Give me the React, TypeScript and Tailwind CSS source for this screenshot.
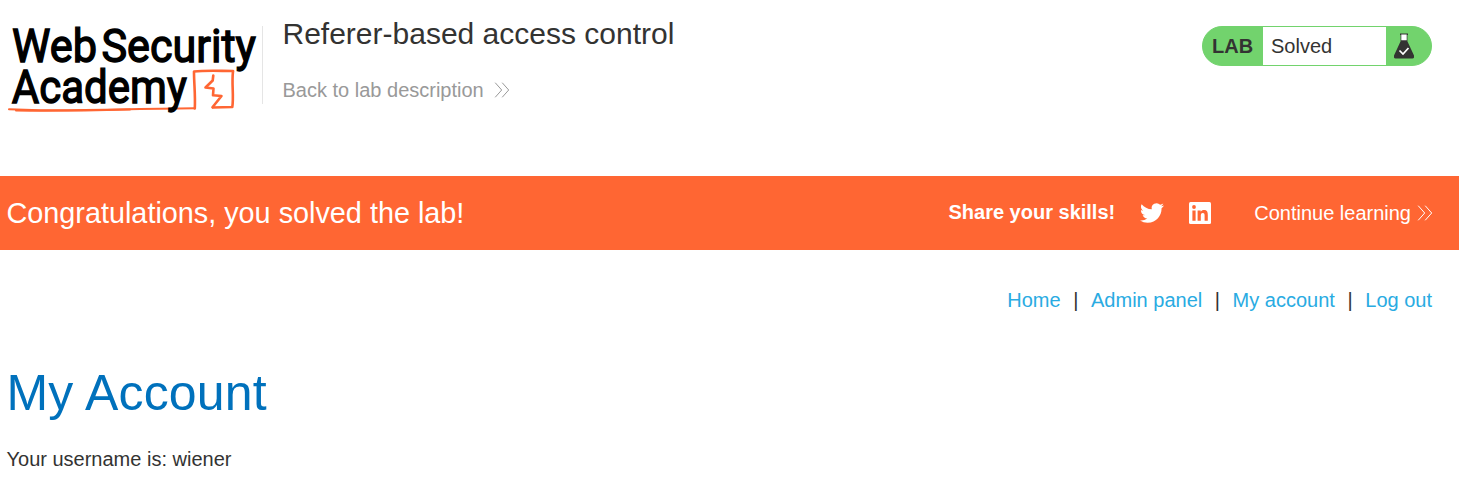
function Logo() {
  return (
    <svg viewBox="0 0 262 120" className="block h-[120px] w-[262px] shrink-0 overflow-visible" role="img" aria-label="Web Security Academy">
      <g fill="none" stroke="#ff6633" strokeLinejoin="round" strokeLinecap="round">
        <path d="M9 109.300 L40 110.200 C80 110.500 130 108.800 194.500 108.300" strokeWidth="2" />
        <path d="M16 110.500 C50 111 90 110.500 130 109.500" strokeWidth="2" />
        <path d="M194.800 108.500 C195.500 95 194 84 194 71.500 C206 70.200 220 71 233 71" strokeWidth="2.600" />
        <path d="M233 71.300 C231.500 84 234 96 232.300 107 L213 107.500" strokeWidth="2.600" />
        <path d="M213.300 75.500 L212.700 80.500 L205.500 87.500 L213.500 88.500 L213 95.300 L221.500 96 L212.500 107.300" strokeWidth="2.600" />
      </g>
      <g fill="#000" stroke="#000" strokeWidth="1.400" fontFamily="Roboto, sans-serif" fontWeight="400" fontSize="46.500">
        <text x="12" y="61.500" textLength="85" lengthAdjust="spacingAndGlyphs">Web</text>
        <text x="101.500" y="61.500" textLength="154.500" lengthAdjust="spacingAndGlyphs">Security</text>
        <text x="11.800" y="102.500" textLength="175" lengthAdjust="spacingAndGlyphs">Academy</text>
      </g>
    </svg>
  );
}

function Chevrons() {
  return (
    <svg viewBox="0 0 16 16" className="h-4 w-4 shrink-0" fill="none" stroke="currentColor" strokeWidth="1">
      <path d="M1.200 0.700 L7.700 8 L1.200 15.300 M8.200 0.700 L14.700 8 L8.200 15.300" />
    </svg>
  );
}

function Flask() {
  return (
    <svg viewBox="0 0 20 26" className="h-[26px] w-5">
      <path d="M6 0.500 H14 V2 H13.400 V8.300 L20 22.500 Q20.600 25.500 18.500 25.500 H1.500 Q-0.600 25.500 0 22.500 L6.600 8.300 V2 H6 Z" fill="#333332" />
      <path d="M7.300 1.500 H12.700 V7.300 H7.300 Z" fill="#fff" />
      <path d="M5.500 17.500 L9 21 L14.500 15" fill="none" stroke="#fff" strokeWidth="1.700" />
    </svg>
  );
}

function Twitter() {
  return (
    <svg viewBox="0 0 24 24" className="h-6 w-6" fill="currentColor">
      <path d="M23.953 4.570a10 10 0 01-2.825.775 4.958 4.958 0 002.163-2.723c-.951.555-2.005.959-3.127 1.184a4.920 4.920 0 00-8.384 4.482C7.690 8.095 4.067 6.130 1.640 3.162a4.822 4.822 0 00-.666 2.475c0 1.710.870 3.213 2.188 4.096a4.904 4.904 0 01-2.228-.616v.060a4.923 4.923 0 003.946 4.827 4.996 4.996 0 01-2.212.085 4.936 4.936 0 004.604 3.417 9.867 9.867 0 01-6.102 2.105c-.390 0-.779-.023-1.170-.067a13.995 13.995 0 007.557 2.209c9.053 0 13.998-7.496 13.998-13.985 0-.210 0-.420-.015-.630A9.935 9.935 0 0024 4.590z" />
    </svg>
  );
}

function LinkedIn() {
  return (
    <svg viewBox="0 0 22 22" className="h-[22px] w-[22px]">
      <rect width="22" height="22" rx="1.500" fill="#fff" />
      <g fill="#ff6633">
        <circle cx="5" cy="5" r="1.900" />
        <path d="M3.400 8.400 H6.600 V18.700 H3.400 Z M8.600 8.400 H11.700 V9.800 C12.400 8.700 13.500 8.100 14.900 8.100 C18 8.100 18.800 10.100 18.800 13 V18.700 H15.600 V13.600 C15.600 12.200 15.500 10.900 13.800 10.900 C12.100 10.900 11.800 12.200 11.800 13.600 V18.700 H8.600 Z" />
      </g>
    </svg>
  );
}

export default function App() {
  return (
    <div className="h-[486px] overflow-hidden bg-white font-['Liberation_Sans',Arial,sans-serif] text-[20px] leading-[30px] whitespace-nowrap text-[#333332]">
      <header className="flex h-[176px] items-start">
        <Logo />
        <div className="mt-[26px] h-[78px] w-px bg-[#e5e5e5]" />
        <div className="ml-[19.500px] flex grow flex-col pt-[14px]">
          <h2 className="text-[30px] leading-[40px]">Referer-based access control</h2>
          <a className="mt-[21px] flex items-center gap-2.5 text-[#999]">
            Back to lab description
            <Chevrons />
          </a>
        </div>
        <div className="mt-[26px] mr-[27px] flex h-10 w-[230px] overflow-hidden rounded-[20px] border border-[#72d36d] bg-[#72d36d]">
          <div className="flex w-[60px] items-center pl-[9px] font-bold">LAB</div>
          <div className="flex w-[123px] items-center bg-white pl-2">Solved</div>
          <div className="flex grow items-center pl-2"><Flask /></div>
        </div>
      </header>
      <section className="flex h-[74px] items-center bg-[#ff6633] pr-[26px] pl-[6.500px] text-white">
        <h4 className="grow text-[28.800px]">Congratulations, you solved the lab!</h4>
        <span className="mb-0.5 font-bold">Share your skills!</span>
        <span className="ml-[25px]"><Twitter /></span>
        <span className="ml-[25px]"><LinkedIn /></span>
        <a className="ml-[43px] flex items-center gap-1.5">
          Continue learning
          <Chevrons />
        </a>
      </section>
      <nav className="flex justify-end gap-[12.600px] pt-[35px] pr-[27px] text-[#29abe2]">
        <a>Home</a>
        <span className="text-[#333332]">|</span>
        <a>Admin panel</a>
        <span className="text-[#333332]">|</span>
        <a>My account</a>
        <span className="text-[#333332]">|</span>
        <a>Log out</a>
      </nav>
      <main className="pl-[6.500px]">
        <h1 className="mt-12 text-[50px] leading-[60px] tracking-[0.2px] text-[#0071bc]">My Account</h1>
        <p className="mt-[21px]">Your username is: wiener</p>
      </main>
    </div>
  );
}
